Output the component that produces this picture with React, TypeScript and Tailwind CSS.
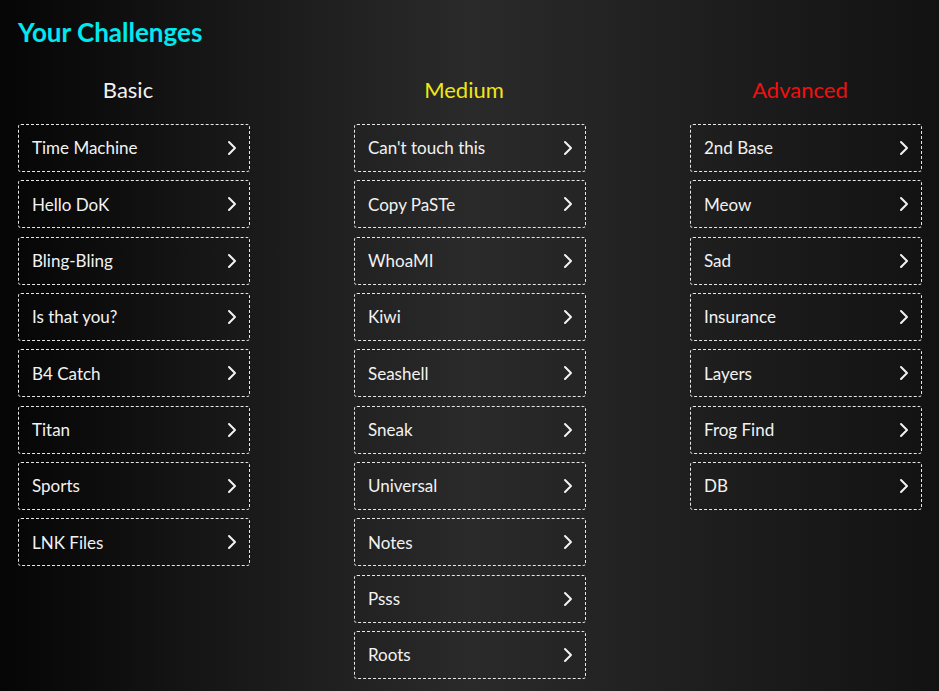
import React from 'react';

const columns = [
  {
    title: 'Basic',
    color: 'text-[#f2f2f2]',
    items: ['Time Machine', 'Hello DoK', 'Bling-Bling', 'Is that you?', 'B4 Catch', 'Titan', 'Sports', 'LNK Files'],
  },
  {
    title: 'Medium',
    color: 'text-[#f0e614]',
    items: ["Can't touch this", 'Copy PaSTe', 'WhoaMI', 'Kiwi', 'Seashell', 'Sneak', 'Universal', 'Notes', 'Psss', 'Roots'],
  },
  {
    title: 'Advanced',
    color: 'text-[#f01010]',
    items: ['2nd Base', 'Meow', 'Sad', 'Insurance', 'Layers', 'Frog Find', 'DB'],
  },
];

const Chevron: React.FC = () => (
  <svg width="12" height="16" viewBox="0 0 12 16" fill="none">
    <path d="M3 2 L9 8 L3 14" stroke="#f2f2f2" strokeWidth="2" strokeLinecap="round" strokeLinejoin="round" />
  </svg>
);

const App: React.FC = () => {
  return (
    <div className="w-[939px] h-[691px] overflow-hidden bg-[linear-gradient(to_right,#050505_0%,#1c1c1c_30%,#2a2a2a_50%,#222222_67%,#121212_100%)] font-['Lato',sans-serif] text-[#f2f2f2]">
      <h1 className="pl-[18px] pt-[16px] text-[26px] font-bold leading-[32px] text-[#00e8f0]">Your Challenges</h1>

      <div className="flex justify-between px-[18px] pr-[17px] mt-[28px]">
        {columns.map((col) => (
          <div key={col.title} className="w-[232px] flex flex-col">
            {/* Column heading */}
            <h2 className={`text-center pr-[12px] text-[22px] leading-[28px] ${col.color}`}>{col.title}</h2>
            <ul className="mt-[20px] flex flex-col gap-[8.33px]">
              {col.items.map((item) => (
                <li
                  key={item}
                  className="h-[48px] flex items-center justify-between border border-dashed border-[#e8e8e8] rounded-[3px] pl-[13px] pr-[11px] text-[17px]"
                >
                  <span>{item}</span>
                  <Chevron />
                </li>
              ))}
            </ul>
          </div>
        ))}
      </div>
    </div>
  );
};

export default App;
